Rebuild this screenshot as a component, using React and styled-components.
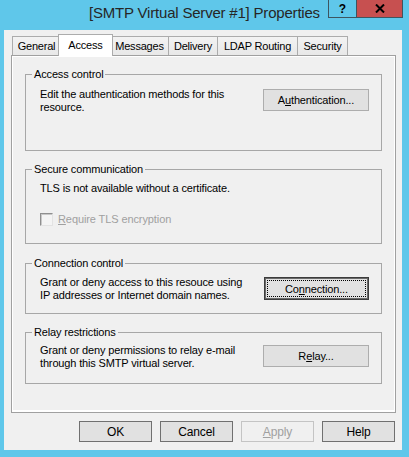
import React from 'react';
import styled, { createGlobalStyle } from 'styled-components';

const Global = createGlobalStyle`
  html, body { margin: 0; padding: 0; }
  body { width: 409px; height: 457px; overflow: hidden; background: #5fc7ea; }
  #root { width: 409px; height: 457px; }
`;

const Window = styled.div`
  width: 409px;
  height: 457px;
  background: #5fc7ea;
  display: flex;
  flex-direction: column;
  font-family: "Liberation Sans", Arial, sans-serif;
  color: #000;
`;

const TitleBar = styled.div`
  height: 30px;
  flex: none;
  display: grid;
  grid-template-columns: 1fr auto 1fr;
  align-items: start;
`;

const Title = styled.div`
  grid-column: 2;
  font-size: 15px;
  letter-spacing: -0.2px;
  line-height: 18px;
  padding-top: 4px;
  color: #262626;
  white-space: nowrap;
`;

const Caption = styled.div`
  grid-column: 3;
  justify-self: end;
  margin-right: 6px;
  display: flex;
  border: 1px solid #3d5560;
  border-top: none;
`;

const CapButton = styled.div`
  width: ${p => p.$w}px;
  height: 17px;
  display: flex;
  align-items: center;
  justify-content: center;
  background: ${p => p.$bg};
  border-left: ${p => (p.$sep ? '1px solid #3d5560' : 'none')};
  font-weight: bold;
  font-size: 12px;
  color: #000;
`;

const Client = styled.div`
  flex: 1;
  margin: 0 7px 7px 4px;
  background: #f0f0f0;
  display: flex;
  flex-direction: column;
  padding: 4px 6px 8px 7px;
  min-height: 0;
`;

const TabStrip = styled.div`
  display: flex;
  align-items: flex-end;
  height: 22px;
  padding-left: 1px;
  margin-bottom: -1px;
  position: relative;
  z-index: 1;
  flex: none;
`;

const Tab = styled.div`
  box-sizing: border-box;
  width: ${p => p.$w + (p.$active ? 4 : 0)}px;
  height: ${p => (p.$active ? 22 : 19)}px;
  margin-left: ${p => (p.$first ? 0 : p.$active ? -3 : -1)}px;
  margin-right: ${p => (p.$active ? -2 : 0)}px;
  margin-bottom: ${p => (p.$active ? 0 : 1)}px;
  border: 1px solid #acacac;
  border-bottom: none;
  background: ${p => (p.$active ? '#ffffff' : 'linear-gradient(#f3f3f3, #e8e8e8)')};
  display: flex;
  align-items: center;
  justify-content: center;
  padding-bottom: ${p => (p.$active ? 2 : 0)}px;
  font-size: 11px;
  letter-spacing: -0.2px;
  white-space: nowrap;
  z-index: ${p => (p.$active ? 2 : 1)};
`;

const Panel = styled.div`
  flex: 1;
  border: 1px solid #a0a0a0;
  box-shadow: inset 1px 1px 0 #ffffff, inset -1px -2px 0 #ffffff;
  padding: 18px 13px 0 13px;
  display: flex;
  flex-direction: column;
`;

const GroupBox = styled.div`
  box-sizing: border-box;
  height: ${p => p.$h}px;
  margin-top: ${p => p.$mt}px;
  border: 1px solid #a7a7a7;
  padding: 0 12px 0 14px;
  display: flex;
  flex-direction: column;
  flex: none;
`;

const Legend = styled.div`
  align-self: flex-start;
  margin: -7px 0 0 -8px;
  padding: 0 2px;
  background: #f0f0f0;
  font-size: 11px;
  line-height: 13px;
  letter-spacing: -0.15px;
  white-space: nowrap;
`;

const Row = styled.div`
  display: flex;
  justify-content: space-between;
  align-items: flex-start;
  margin-top: ${p => p.$mt}px;
`;

const Text = styled.div`
  font-size: 11px;
  line-height: ${p => p.$lh || 13}px;
  letter-spacing: -0.15px;
  color: #000;
  margin-top: ${p => p.$mt || 0}px;
`;

const Button = styled.div`
  box-sizing: border-box;
  width: ${p => p.$w}px;
  height: ${p => p.$h}px;
  margin-top: ${p => p.$mt || 0}px;
  flex: none;
  display: flex;
  align-items: center;
  justify-content: center;
  background: ${p => (p.$disabled ? '#f0f0f0' : '#e1e1e1')};
  border: 1px solid ${p => (p.$disabled ? '#c4c4c4' : p.$dark ? '#707070' : '#adadad')};
  box-shadow: ${p => (p.$default ? 'inset 0 0 0 1px #6a6a6a' : 'none')};
  border-color: ${p => (p.$default ? '#3c3c3c' : undefined)};
  outline: ${p => (p.$default ? '1px dotted #000' : 'none')};
  outline-offset: -4px;
  font-size: ${p => p.$fs || 11}px;
  letter-spacing: -0.15px;
  color: ${p => (p.$disabled ? '#a0a0a0' : '#000')};
  white-space: nowrap;
`;

const U = styled.span`
  text-decoration: underline;
  text-underline-offset: 1px;
`;

const CheckRow = styled.div`
  display: flex;
  align-items: center;
  gap: 5px;
  margin-top: ${p => p.$mt}px;
`;

const CheckBox = styled.div`
  box-sizing: border-box;
  width: 13px;
  height: 13px;
  border: 1px solid;
  border-color: #8f8f8f #e3e3e3 #e3e3e3 #8f8f8f;
  background: #f4f4f4;
  box-shadow: inset 1px 1px 0 #c8c8c8;
`;

const CheckLabel = styled.span`
  font-size: 11px;
  line-height: 13px;
  letter-spacing: -0.1px;
  color: #a0a0a0;
`;

const ButtonBar = styled.div`
  display: flex;
  justify-content: flex-end;
  gap: 8px;
  margin-top: 8px;
  padding-right: 1px;
  flex: none;
`;

const tabs = [
  { label: 'General', w: 49 },
  { label: 'Access', w: 51, active: true },
  { label: 'Messages', w: 59 },
  { label: 'Delivery', w: 50 },
  { label: 'LDAP Routing', w: 81 },
  { label: 'Security', w: 51 },
];

export default function App() {
  return (
    <Window>
      <Global />
      <TitleBar>
        <Title>[SMTP Virtual Server #1] Properties</Title>
        <Caption>
          <CapButton $w={27} $bg="transparent">?</CapButton>
          <CapButton $w={45} $bg="#c75050" $sep>
            <svg width="10" height="9" viewBox="0 0 10 9">
              <path d="M1 0.5 L9 8.5 M9 0.5 L1 8.5" stroke="#000" strokeWidth="2" fill="none" />
            </svg>
          </CapButton>
        </Caption>
      </TitleBar>
      <Client>
        <TabStrip>
          {tabs.map((t, i) => (
            <Tab key={t.label} $w={t.w} $active={t.active} $first={i === 0}>
              {t.label}
            </Tab>
          ))}
        </TabStrip>
        <Panel>
          <GroupBox $h={77} $mt={0}>
            <Legend>Access control</Legend>
            <Row $mt={7}>
              <Text>
                Edit the authentication methods for this
                <br />
                resource.
              </Text>
              <Button $w={106} $h={22} $mt={1}>
                A<U>u</U>thentication...
              </Button>
            </Row>
          </GroupBox>
          <GroupBox $h={75} $mt={18}>
            <Legend>Secure communication</Legend>
            <Text $mt={6}>TLS is not available without a certificate.</Text>
            <CheckRow $mt={18}>
              <CheckBox />
              <CheckLabel>
                <U>R</U>equire TLS encryption
              </CheckLabel>
            </CheckRow>
          </GroupBox>
          <GroupBox $h={51} $mt={19}>
            <Legend>Connection control</Legend>
            <Row $mt={6}>
              <Text>
                Grant or deny access to this resouce using
                <br />
                IP addresses or Internet domain names.
              </Text>
              <Button $w={105} $h={23} $mt={1} $default>
                Co<U>n</U>nection...
              </Button>
            </Row>
          </GroupBox>
          <GroupBox $h={52} $mt={18}>
            <Legend>Relay restrictions</Legend>
            <Row $mt={5}>
              <Text>
                Grant or deny permissions to relay e-mail
                <br />
                through this SMTP virtual server.
              </Text>
              <Button $w={106} $h={22} $mt={1}>
                R<U>e</U>lay...
              </Button>
            </Row>
          </GroupBox>
        </Panel>
        <ButtonBar>
          <Button $w={73} $h={21} $fs={12} $dark>OK</Button>
          <Button $w={73} $h={21} $fs={12} $dark>Cancel</Button>
          <Button $w={73} $h={21} $fs={12} $disabled>
            <U>A</U>pply
          </Button>
          <Button $w={73} $h={21} $fs={12} $dark>Help</Button>
        </ButtonBar>
      </Client>
    </Window>
  );
}
